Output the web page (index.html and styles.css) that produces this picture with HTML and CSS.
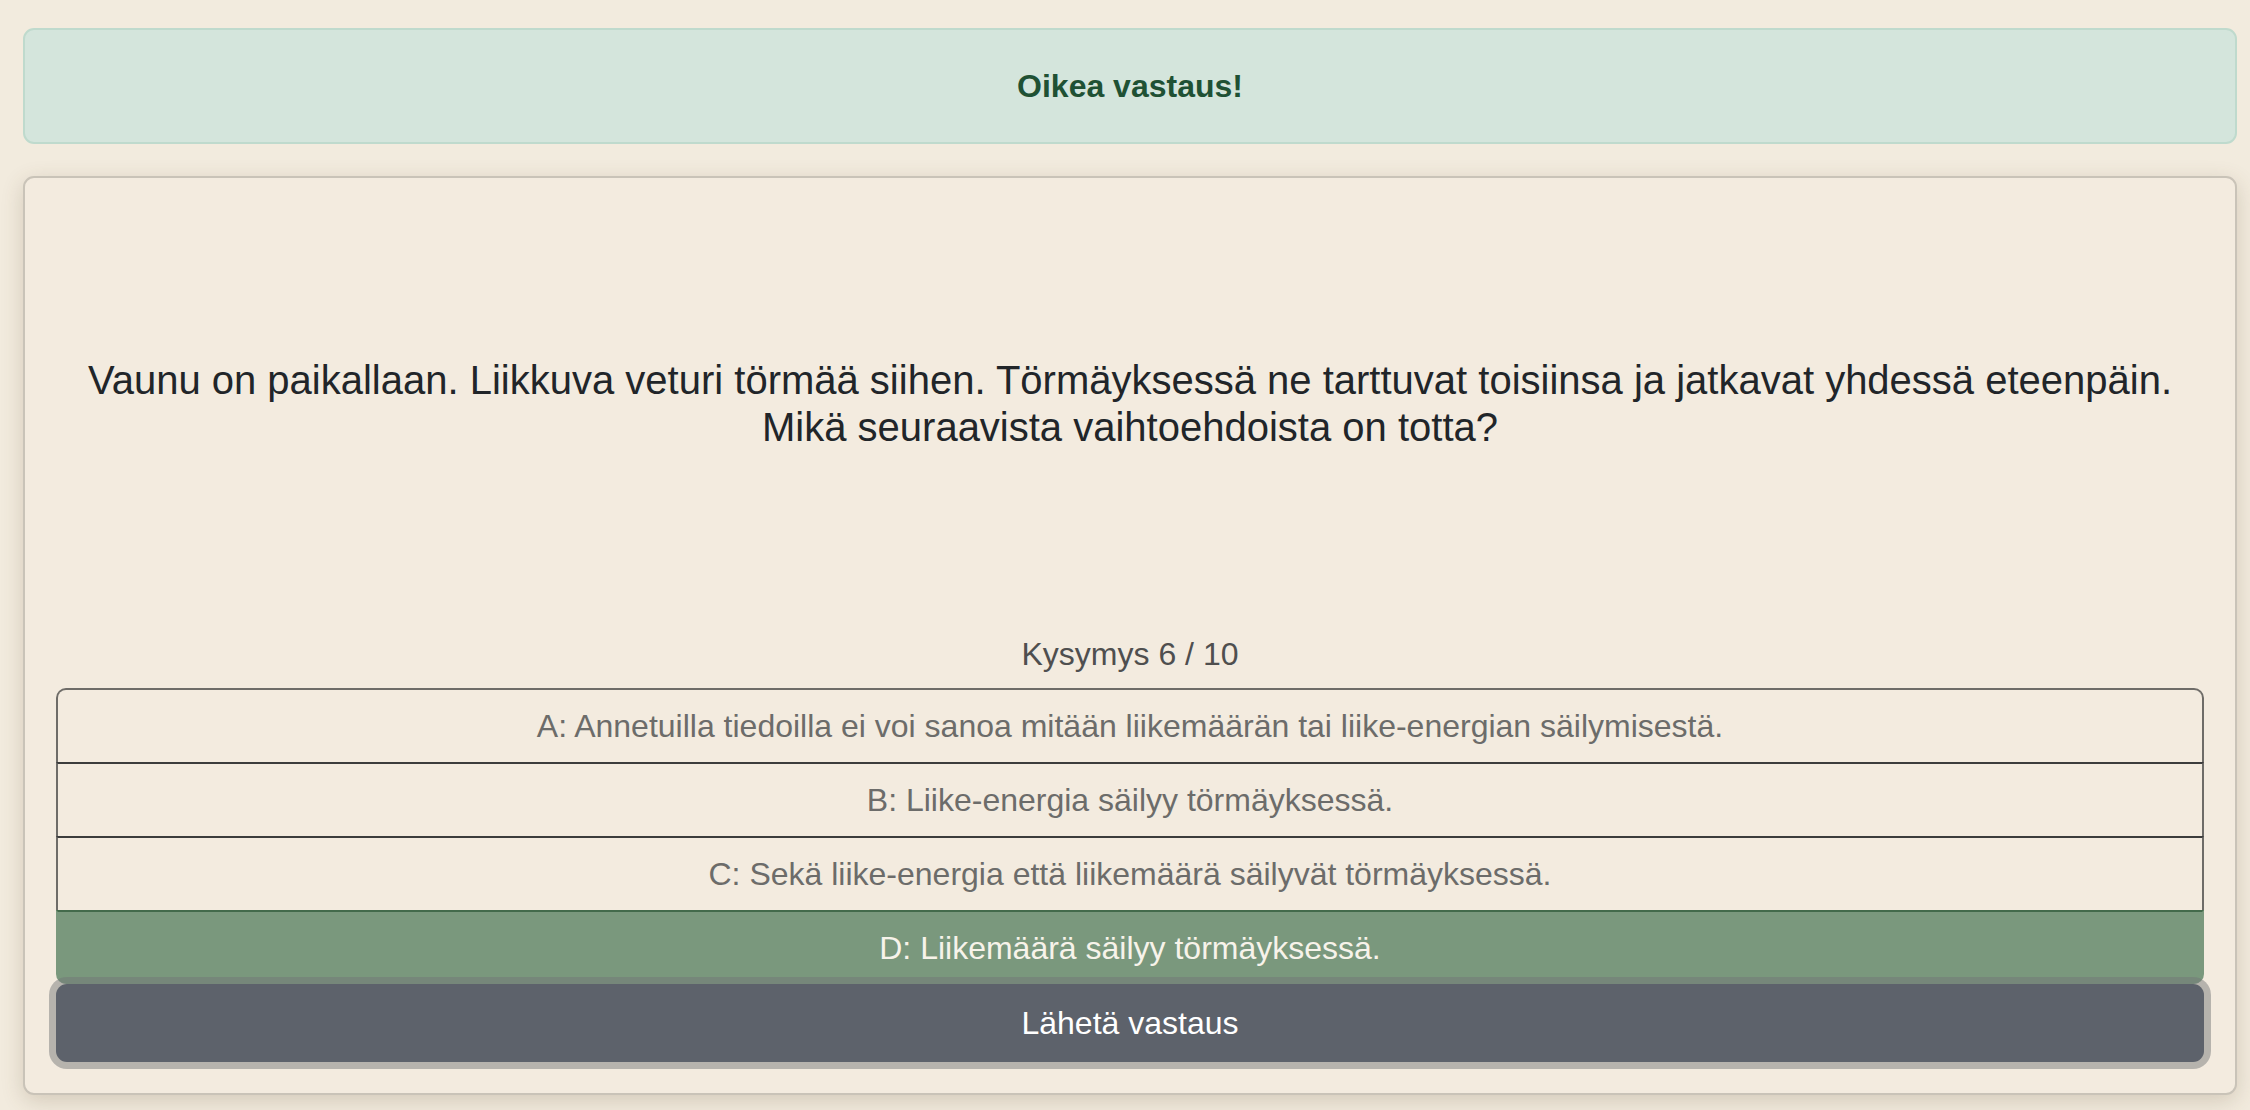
FILE: index.html
```html
<!DOCTYPE html>
<html lang="fi">
<head>
<meta charset="utf-8">
<title>Kysymys 6 / 10</title>
<link rel="stylesheet" href="styles.css">
</head>
<body>
<div class="page">
  <div class="alert">Oikea vastaus!</div>
  <div class="card">
    <div class="question">
      <p>Vaunu on paikallaan. Liikkuva veturi törmää siihen. Törmäyksessä ne tarttuvat toisiinsa ja jatkavat yhdessä eteenpäin. Mikä seuraavista vaihtoehdoista on totta?</p>
    </div>
    <div class="counter">Kysymys 6 / 10</div>
    <div class="options">
      <div class="option">A: Annetuilla tiedoilla ei voi sanoa mitään liikemäärän tai liike-energian säilymisestä.</div>
      <div class="option">B: Liike-energia säilyy törmäyksessä.</div>
      <div class="option">C: Sekä liike-energia että liikemäärä säilyvät törmäyksessä.</div>
      <div class="option selected">D: Liikemäärä säilyy törmäyksessä.</div>
    </div>
    <button class="submit">Lähetä vastaus</button>
  </div>
</div>
</body>
</html>
```

FILE: styles.css
```css
* { box-sizing: border-box; }
html, body { margin: 0; padding: 0; }
body {
  background: #f2ebde;
  font-family: "Liberation Sans", Arial, sans-serif;
  color: #212529;
  height: 1110px;
  overflow: hidden;
}
.page {
  padding: 28px 13px 0 23px;
  display: flex;
  flex-direction: column;
  gap: 32px;
}
.alert {
  height: 116px;
  background: #d4e5dc;
  border: 2px solid #bfdacd;
  border-radius: 11px;
  display: flex;
  align-items: center;
  justify-content: center;
  font-weight: bold;
  font-size: 32px;
  color: #1f5134;
}
.card {
  height: 919px;
  background: #f3ebdf;
  border: 2px solid #c9c3b8;
  border-radius: 11px;
  box-shadow: 0 6px 22px rgba(90, 70, 40, 0.2);
  padding: 0 31px 31px 31px;
  display: flex;
  flex-direction: column;
}
.question {
  flex: 1;
  display: flex;
  align-items: center;
  justify-content: center;
  text-align: center;
  padding: 0 20px 6px;
}
.question p {
  margin: 0;
  font-size: 40px;
  line-height: 47px;
  color: #212529;
}
.counter {
  font-size: 32px;
  line-height: 38px;
  text-align: center;
  color: #4f4f4f;
  margin-bottom: 15px;
}
.options {
  display: flex;
  flex-direction: column;
}
.option {
  height: 74px;
  display: flex;
  align-items: center;
  justify-content: center;
  font-size: 32px;
  color: #6c6c6a;
  border-left: 2px solid #6e6c68;
  border-right: 2px solid #6e6c68;
  border-top: 2px solid #3c3c3c;
}
.option:first-child {
  border-top-color: #6e6c68;
  border-radius: 10px 10px 0 0;
}
.option.selected {
  background: #7a987d;
  border-color: #7a987d;
  border-top-color: #436a4b;
  color: #f7f3ea;
  border-radius: 0 0 10px 10px;
}
.submit {
  width: 100%;
  height: 78px;
  border: none;
  border-radius: 11px;
  background: #5d626b;
  color: #ffffff;
  font-family: "Liberation Sans", Arial, sans-serif;
  font-size: 32px;
  padding: 0;
  box-shadow: 0 0 0 7px rgba(115, 118, 120, 0.48);
}
```
